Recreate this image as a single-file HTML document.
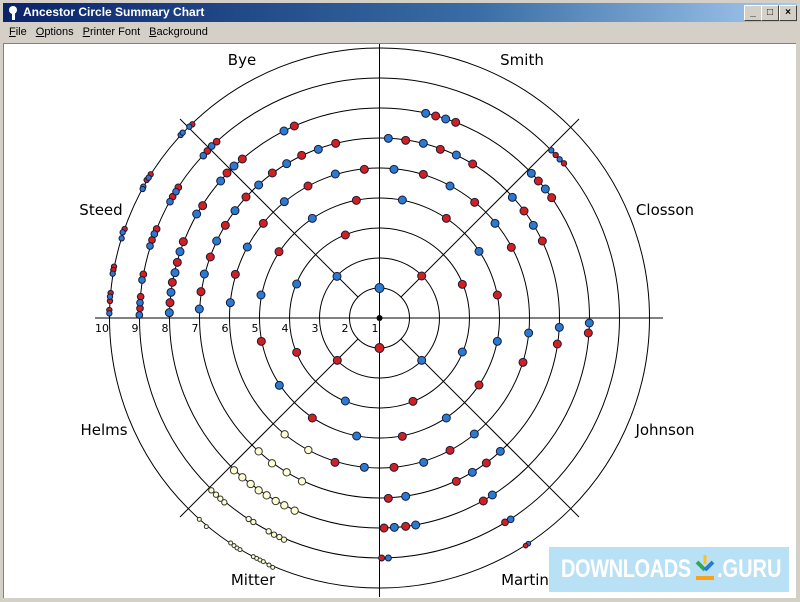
<!DOCTYPE html>
<html><head><meta charset="utf-8"><style>
html,body{margin:0;padding:0}
body{width:800px;height:602px;background:#d4d0c8;position:relative;overflow:hidden;font-family:"DejaVu Sans","Liberation Sans",sans-serif}
.title{position:absolute;left:3px;top:3px;width:794px;height:19px;background:linear-gradient(90deg,#0a246a,#3a6ea5 60%,#a6caf0);color:#fff;font-weight:bold;font-size:12px;line-height:19px;font-family:"Liberation Sans",sans-serif}
.title span{position:absolute;left:20px;top:0}
.btn{position:absolute;top:2px;width:16px;height:14px;background:#d4d0c8;border:1px solid;border-color:#fff #404040 #404040 #fff;color:#000;font-size:10px;line-height:13px;text-align:center;font-weight:bold}
.menu{position:absolute;left:3px;top:23px;height:19px;font-size:11px;line-height:19px;color:#000;font-family:"Liberation Sans",sans-serif}
.menu span{margin-left:6px;margin-right:3px}
.client{position:absolute;left:3px;top:43px;width:792px;height:554px;background:#fff;border-top:1px solid #808080;border-left:1px solid #808080}
svg{position:absolute;left:0;top:0}
.wm{position:absolute;left:549px;top:547px;width:240px;height:45px;background:#b9e1f6}
</style></head><body>
<div class="title"><span>Ancestor Circle Summary Chart</span>
<svg width="16" height="18" style="left:3px;top:1px"><circle cx="7" cy="6" r="4" fill="#fff"/><rect x="6" y="9" width="3" height="7" fill="#fff"/></svg>
<div class="btn" style="left:741px">_</div><div class="btn" style="left:758px">□</div><div class="btn" style="left:776px">×</div></div>
<div class="menu"><span><u>F</u>ile</span><span><u>O</u>ptions</span><span><u>P</u>rinter Font</span><span><u>B</u>ackground</span></div>
<div class="client"></div>
<svg width="800" height="602" viewBox="0 0 800 602">
<defs><clipPath id="c"><rect x="4" y="44" width="791" height="553"/></clipPath></defs>
<g clip-path="url(#c)" fill="none" stroke="#000" stroke-width="1">
<circle cx="379.5" cy="318" r="30"/><circle cx="379.5" cy="318" r="60"/><circle cx="379.5" cy="318" r="90"/>
<circle cx="379.5" cy="318" r="120"/><circle cx="379.5" cy="318" r="150"/><circle cx="379.5" cy="318" r="180"/>
<circle cx="379.5" cy="318" r="210"/><circle cx="379.5" cy="318" r="240"/><circle cx="379.5" cy="318" r="270"/>
<line x1="95" y1="318" x2="663" y2="318"/><line x1="379.5" y1="44" x2="379.5" y2="600"/>
<line x1="358" y1="297" x2="180" y2="119"/><line x1="401" y1="297" x2="579" y2="119"/>
<line x1="358" y1="339" x2="180" y2="517"/><line x1="401" y1="339" x2="579" y2="517"/>
</g>
<g font-family="DejaVu Sans,Liberation Sans,sans-serif" font-size="15" fill="#000" text-anchor="middle">
<text x="242" y="65">Bye</text><text x="522" y="65">Smith</text>
<text x="101" y="215">Steed</text><text x="665" y="215">Closson</text>
<text x="104" y="435">Helms</text><text x="665" y="435">Johnson</text>
<text x="253" y="585">Mitter</text><text x="525" y="585">Martin</text>
</g>
<g font-family="DejaVu Sans,Liberation Sans,sans-serif" font-size="11" fill="#000" text-anchor="middle">
<text x="102" y="332">10</text><text x="135" y="332">9</text><text x="165" y="332">8</text><text x="195" y="332">7</text><text x="225" y="332">6</text><text x="255" y="332">5</text><text x="285" y="332">4</text><text x="315" y="332">3</text><text x="345" y="332">2</text><text x="375" y="332">1</text>
</g>
<circle cx="379.5" cy="318" r="3" fill="#000"/>
<g stroke="#1a1a3a" stroke-width="1">
<circle cx="379.5" cy="288" r="4.5" fill="#2a7ad0"/><circle cx="379.5" cy="348" r="4.5" fill="#d02020"/>
</g>
<g transform="translate(90,45) scale(0.33333)" stroke="#1a1a3a" stroke-width="3">
<g fill="#d02020"><circle cx="307" cy="238" r="8"/><circle cx="182" cy="388" r="8"/><circle cx="170" cy="405" r="8"/><circle cx="104" cy="552" r="8"/><circle cx="72" cy="665" r="8"/><circle cx="70" cy="675" r="8"/><circle cx="62" cy="744" r="8"/><circle cx="60" cy="768" r="8"/><circle cx="58" cy="795" r="8"/></g>
<g fill="#2a7ad0"><circle cx="298" cy="245" r="8"/><circle cx="272" cy="270" r="8"/><circle cx="278" cy="263" r="8"/><circle cx="176" cy="398" r="8"/><circle cx="160" cy="425" r="8"/><circle cx="158" cy="432" r="8"/><circle cx="98" cy="562" r="8"/><circle cx="95" cy="580" r="8"/><circle cx="68" cy="686" r="8"/><circle cx="60" cy="755" r="8"/><circle cx="58" cy="805" r="8"/></g>
<g fill="#d02020"><circle cx="380" cy="290" r="10"/><circle cx="352" cy="318" r="10"/><circle cx="265" cy="427" r="10"/><circle cx="248" cy="455" r="10"/><circle cx="200" cy="552" r="10"/><circle cx="186" cy="585" r="10"/><circle cx="160" cy="688" r="10"/><circle cx="152" cy="755" r="10"/><circle cx="150" cy="790" r="10"/></g>
<g fill="#2a7ad0"><circle cx="365" cy="303" r="10"/><circle cx="340" cy="332" r="10"/><circle cx="258" cy="440" r="10"/><circle cx="240" cy="470" r="10"/><circle cx="193" cy="567" r="10"/><circle cx="180" cy="603" r="10"/><circle cx="156" cy="705" r="10"/><circle cx="150" cy="773" r="10"/><circle cx="148" cy="810" r="10"/></g>
<g fill="#d02020"><circle cx="613" cy="243" r="12"/><circle cx="457" cy="342" r="12"/><circle cx="411" cy="384" r="12"/><circle cx="338" cy="482" r="12"/><circle cx="280" cy="590" r="12"/><circle cx="262" cy="652" r="12"/><circle cx="247" cy="712" r="12"/><circle cx="240" cy="773" r="12"/>
<circle cx="737" cy="295" r="12"/><circle cx="635" cy="331" r="12"/><circle cx="547" cy="384" r="12"/><circle cx="468" cy="456" r="12"/><circle cx="406" cy="541" r="12"/><circle cx="361" cy="636" r="12"/><circle cx="333" cy="740" r="12"/>
<circle cx="823" cy="373" r="12"/><circle cx="654" cy="423" r="12"/><circle cx="520" cy="535" r="12"/><circle cx="436" cy="688" r="12"/><circle cx="799" cy="466" r="12"/><circle cx="567" cy="620" r="12"/><circle cx="766" cy="570" r="12"/></g>
<g fill="#2a7ad0"><circle cx="582" cy="258" r="12"/><circle cx="432" cy="363" r="12"/><circle cx="392" cy="408" r="12"/><circle cx="320" cy="507" r="12"/><circle cx="270" cy="620" r="12"/><circle cx="255" cy="683" r="12"/><circle cx="243" cy="742" r="12"/><circle cx="238" cy="803" r="12"/>
<circle cx="685" cy="313" r="12"/><circle cx="590" cy="356" r="12"/><circle cx="506" cy="420" r="12"/><circle cx="435" cy="497" r="12"/><circle cx="380" cy="588" r="12"/><circle cx="343" cy="687" r="12"/><circle cx="328" cy="792" r="12"/>
<circle cx="736" cy="387" r="12"/><circle cx="583" cy="470" r="12"/><circle cx="472" cy="606" r="12"/><circle cx="421" cy="773" r="12"/><circle cx="667" cy="520" r="12"/><circle cx="513" cy="750" r="12"/><circle cx="620" cy="717" r="12"/><circle cx="741" cy="694" r="12"/></g>
</g>
<g transform="translate(379,45) scale(0.33333)" stroke="#1a1a3a" stroke-width="3">
<g fill="#2a7ad0"><circle cx="517" cy="316" r="8"/><circle cx="542" cy="343" r="8"/></g>
<g fill="#d02020"><circle cx="530" cy="330" r="8"/><circle cx="555" cy="355" r="8"/></g>
<g fill="#2a7ad0"><circle cx="457" cy="385" r="12"/><circle cx="499" cy="432" r="12"/><circle cx="140" cy="205" r="12"/><circle cx="200" cy="222" r="12"/><circle cx="400" cy="457" r="12"/><circle cx="463" cy="541" r="12"/><circle cx="28" cy="280" r="12"/><circle cx="133" cy="295" r="12"/><circle cx="232" cy="330" r="12"/><circle cx="348" cy="535" r="12"/><circle cx="45" cy="373" r="12"/><circle cx="213" cy="423" r="12"/><circle cx="70" cy="465" r="12"/><circle cx="300" cy="619" r="12"/></g>
<g fill="#d02020"><circle cx="478" cy="408" r="12"/><circle cx="518" cy="458" r="12"/><circle cx="170" cy="213" r="12"/><circle cx="230" cy="232" r="12"/><circle cx="435" cy="498" r="12"/><circle cx="490" cy="588" r="12"/><circle cx="80" cy="286" r="12"/><circle cx="184" cy="313" r="12"/><circle cx="281" cy="357" r="12"/><circle cx="397" cy="607" r="12"/><circle cx="133" cy="388" r="12"/><circle cx="287" cy="472" r="12"/><circle cx="202" cy="520" r="12"/><circle cx="355" cy="750" r="12"/><circle cx="128" cy="693" r="12"/><circle cx="250" cy="718" r="12"/></g>
</g>
<g transform="translate(90,318) scale(0.33333)" stroke="#1a1a3a" stroke-width="3">
<g fill="#d02020"><circle cx="514" cy="70" r="12"/><circle cx="620" cy="103" r="12"/><circle cx="742" cy="127" r="12"/><circle cx="667" cy="300" r="12"/><circle cx="735" cy="433" r="12"/></g>
<g fill="#2a7ad0"><circle cx="568" cy="202" r="12"/><circle cx="766" cy="249" r="12"/><circle cx="800" cy="354" r="12"/><circle cx="823" cy="448" r="12"/></g>
<g fill="#ffffd2" stroke="#333">
<circle cx="584" cy="349" r="11"/><circle cx="655" cy="396" r="11"/><circle cx="506" cy="400" r="11"/><circle cx="546" cy="436" r="11"/><circle cx="590" cy="463" r="11"/><circle cx="636" cy="490" r="11"/><circle cx="432" cy="457" r="11"/><circle cx="457" cy="478" r="11"/><circle cx="482" cy="498" r="11"/><circle cx="506" cy="517" r="11"/><circle cx="530" cy="532" r="11"/><circle cx="557" cy="549" r="11"/><circle cx="583" cy="562" r="11"/><circle cx="614" cy="578" r="11"/>
<circle cx="364" cy="517" r="8"/><circle cx="378" cy="530" r="8"/><circle cx="391" cy="542" r="8"/><circle cx="403" cy="553" r="8"/><circle cx="476" cy="603" r="8"/><circle cx="490" cy="612" r="8"/><circle cx="536" cy="640" r="8"/><circle cx="552" cy="650" r="8"/><circle cx="568" cy="657" r="8"/><circle cx="582" cy="665" r="8"/>
<circle cx="328" cy="604" r="6"/><circle cx="349" cy="626" r="6"/><circle cx="422" cy="675" r="6"/><circle cx="432" cy="683" r="6"/><circle cx="441" cy="690" r="6"/><circle cx="450" cy="695" r="6"/><circle cx="490" cy="716" r="6"/><circle cx="500" cy="721" r="6"/><circle cx="510" cy="726" r="6"/><circle cx="520" cy="731" r="6"/><circle cx="537" cy="741" r="6"/><circle cx="548" cy="748" r="6"/></g>
</g>
<g transform="translate(379,318) scale(0.33333)" stroke="#1a1a3a" stroke-width="3">
<g fill="#2a7ad0"><circle cx="128" cy="127" r="12"/><circle cx="250" cy="102" r="12"/><circle cx="355" cy="70" r="12"/><circle cx="449" cy="45" r="12"/><circle cx="541" cy="28" r="12"/><circle cx="631" cy="15" r="12"/><circle cx="202" cy="300" r="12"/><circle cx="286" cy="348" r="12"/><circle cx="364" cy="400" r="12"/><circle cx="134" cy="433" r="12"/><circle cx="280" cy="463" r="12"/><circle cx="80" cy="535" r="12"/><circle cx="340" cy="531" r="12"/><circle cx="46" cy="628" r="12"/><circle cx="110" cy="621" r="12"/><circle cx="395" cy="604" r="10"/><circle cx="28" cy="720" r="9"/><circle cx="448" cy="677" r="7"/></g>
<g fill="#d02020"><circle cx="628" cy="45" r="12"/><circle cx="535" cy="78" r="12"/><circle cx="432" cy="133" r="12"/><circle cx="300" cy="201" r="12"/><circle cx="102" cy="250" r="12"/><circle cx="70" cy="355" r="12"/><circle cx="213" cy="397" r="12"/><circle cx="45" cy="448" r="12"/><circle cx="322" cy="435" r="12"/><circle cx="232" cy="490" r="12"/><circle cx="28" cy="541" r="12"/><circle cx="313" cy="549" r="12"/><circle cx="15" cy="630" r="12"/><circle cx="80" cy="625" r="12"/><circle cx="378" cy="613" r="10"/><circle cx="8" cy="720" r="9"/><circle cx="440" cy="683" r="7"/></g>
</g>
</svg>
<div class="wm"><div style="position:absolute;left:12px;top:8px;font-family:'Liberation Sans',sans-serif;font-weight:bold;font-size:25px;color:#fff;letter-spacing:-0.5px;transform:scaleX(0.8);transform-origin:left">DOWNLOADS</div>
<svg width="24" height="30" style="left:144px;top:6px"><line x1="12" y1="2" x2="12" y2="11" stroke="#f6c21b" stroke-width="3"/><path d="M4 9 L12 17" stroke="#33a853" stroke-width="4" fill="none"/><path d="M20 9 L12 17" stroke="#2a7ad0" stroke-width="4" fill="none"/><rect x="3" y="23" width="18" height="4" fill="#f6a21b"/></svg>
<div style="position:absolute;left:168px;top:8px;font-family:'Liberation Sans',sans-serif;font-weight:bold;font-size:25px;color:#fff;transform:scaleX(0.8);transform-origin:left">.GURU</div></div>
</body></html>
